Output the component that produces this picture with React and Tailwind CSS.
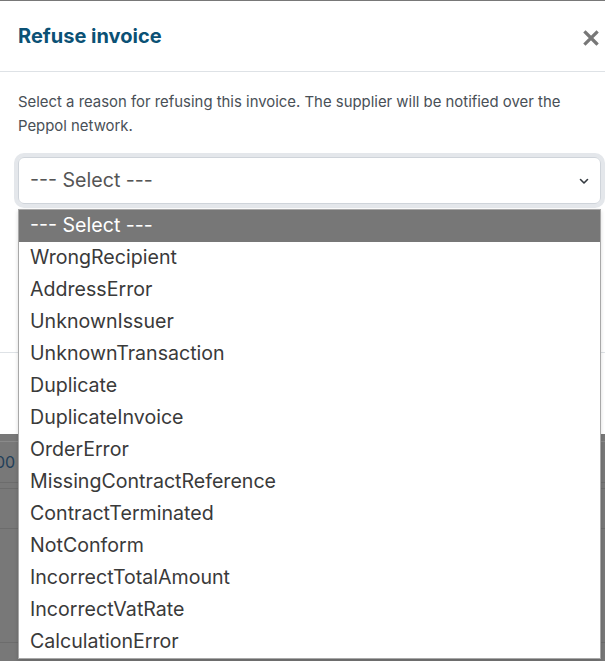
import React from 'react';

const reasons = [
  'WrongRecipient',
  'AddressError',
  'UnknownIssuer',
  'UnknownTransaction',
  'Duplicate',
  'DuplicateInvoice',
  'OrderError',
  'MissingContractReference',
  'ContractTerminated',
  'NotConform',
  'IncorrectTotalAmount',
  'IncorrectVatRate',
  'CalculationError',
];

function CloseIcon() {
  return (
    <svg width="16" height="16" viewBox="0 0 16 16">
      <path d="M2.5 2.5L13.5 13.5M13.5 2.5L2.5 13.5" stroke="#777" strokeWidth="3.2" strokeLinecap="square" />
    </svg>
  );
}

function Chevron() {
  return (
    <svg width="10" height="8" viewBox="0 0 10 8">
      <path d="M1.5 2.5L5 6L8.5 2.5" stroke="#343a40" strokeWidth="1.6" fill="none" strokeLinecap="round" strokeLinejoin="round" />
    </svg>
  );
}

export default function App() {
  return (
    <div className="relative w-[605px] h-[661px] overflow-hidden bg-[#787878] font-['Inter',sans-serif]">
      {/* dimmed page behind the dialog */}
      <div className="flex flex-col">
        <div className="h-[441px]" />
        <div className="h-[41px] border-t border-[#8a8a8a] flex items-center">
          <span className="-ml-[5px] text-[16px] text-[#23405a]">00</span>
        </div>
        <div className="h-[6px] border-t border-[#6c6c6c]" />
        <div className="h-[40px] border-t border-[#6c6c6c]" />
        <div className="h-[114px] border-t border-[#6c6c6c]" />
        <div className="border-t border-[#6c6c6c]" />
      </div>

      {/* dialog */}
      <div className="absolute left-0 top-px w-[619px] bg-white">
        <div className="h-[71px] px-[18px] flex items-center justify-between border-b border-[#dee2e6]">
          <h5 className="text-[20px] font-bold text-[#0b5175] leading-none pb-[1px]">Refuse invoice</h5>
          <button className="-mr-[3px] mt-[4px] p-[5px]">
            <CloseIcon />
          </button>
        </div>
        <div className="h-[280px] px-[18px] pt-[18px]">
          <p className="text-[14.9px] leading-[24px] text-[#495057]">
            Select a reason for refusing this invoice. The supplier will be notified over the
            <br />
            Peppol network.
          </p>
          <div className="mt-[19px] h-[47px] rounded-[6px] border border-[#cfd4da] shadow-[0_0_0_4px_#e4e7eb] flex items-center justify-between pl-[11px] pr-[11px]">
            <span className="text-[19.6px] text-[#555]">--- Select ---</span>
            <Chevron />
          </div>
        </div>
        <div className="h-[82px] border-t border-[#dee2e6]" />
      </div>

      {/* open option list of the select */}
      <ul className="absolute left-[18px] top-[209px] w-[583px] bg-white border border-[#a8a8a8] shadow-[0_2px_4px_rgba(0,0,0,0.15)]">
        <li className="h-[32px] flex items-center pl-[11px] bg-[#777] text-white text-[19.6px]">--- Select ---</li>
        {reasons.map((r) => (
          <li key={r} className="h-[32px] flex items-center pl-[11px] text-[#3a3a3a] text-[19.6px]">
            {r}
          </li>
        ))}
      </ul>
    </div>
  );
}
